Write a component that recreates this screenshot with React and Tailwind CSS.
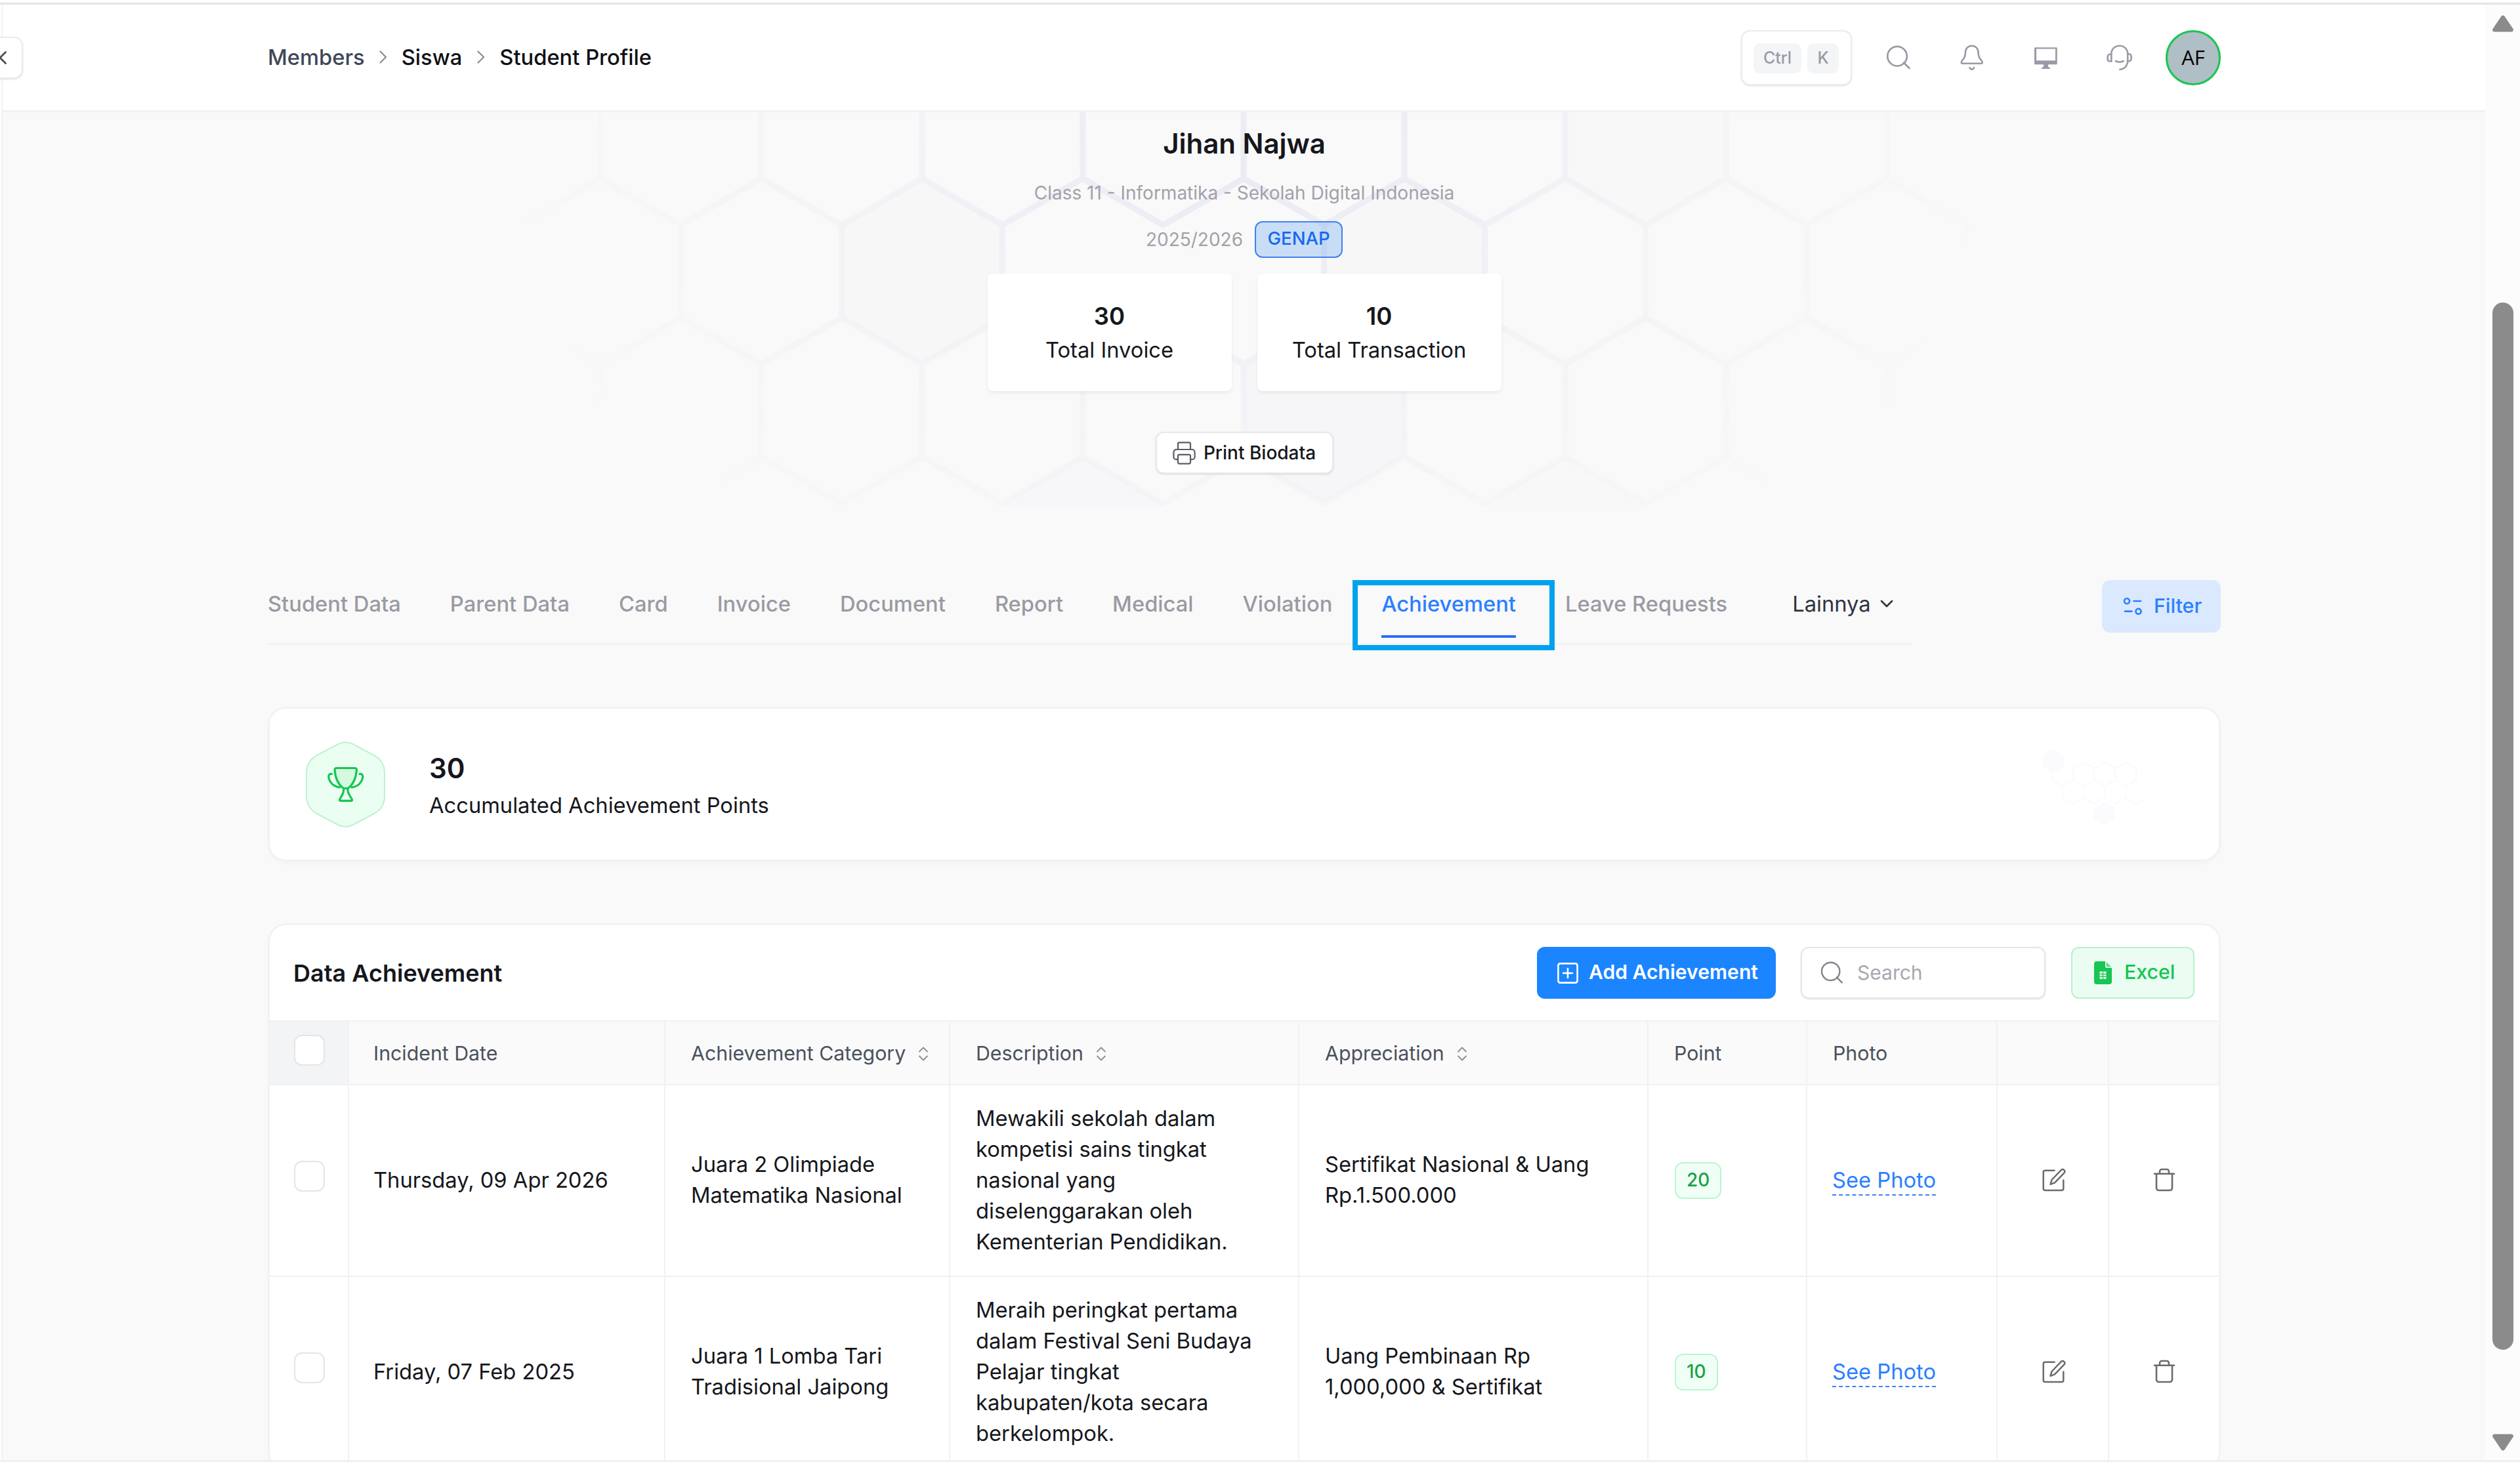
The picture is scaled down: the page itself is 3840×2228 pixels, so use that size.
import React, { useState } from 'react';
import clsx from 'clsx';

const tabs = [
  'Student Data',
  'Parent Data',
  'Card',
  'Invoice',
  'Document',
  'Report',
  'Medical',
  'Violation',
  'Achievement',
  'Leave Requests',
];

const columns = [
  { label: 'Incident Date' },
  { label: 'Achievement Category', sortable: true },
  { label: 'Description', sortable: true },
  { label: 'Appreciation', sortable: true },
  { label: 'Point' },
  { label: 'Photo' },
  { label: '' },
  { label: '' },
];

const achievements = [
  {
    id: 1,
    date: 'Thursday, 09 Apr 2026',
    category: 'Juara 2 Olimpiade\nMatematika Nasional',
    description:
      'Mewakili sekolah dalam\nkompetisi sains tingkat\nnasional yang\ndiselenggarakan oleh\nKementerian Pendidikan.',
    appreciation: 'Sertifikat Nasional & Uang\nRp.1.500.000',
    point: 20,
  },
  {
    id: 2,
    date: 'Friday, 07 Feb 2025',
    category: 'Juara 1 Lomba Tari\nTradisional Jaipong',
    description:
      'Meraih peringkat pertama\ndalam Festival Seni Budaya\nPelajar tingkat\nkabupaten/kota secara\nberkelompok.',
    appreciation: 'Uang Pembinaan Rp\n1,000,000 & Sertifikat',
    point: 10,
  },
];

const GRID = 'grid grid-cols-[121px_482px_434px_532px_532px_242px_290px_170px_167px]';

/* ---------- icons ---------- */

function SearchIcon({ className }) {
  return (
    <svg viewBox="0 0 40 40" className={className} fill="none" stroke="currentColor" strokeWidth="2.7" strokeLinecap="round">
      <circle cx="18" cy="17.7" r="14.8" />
      <path d="M28 27.5 36.5 36" />
    </svg>
  );
}

function BellIcon() {
  return (
    <svg viewBox="0 0 40 40" className="size-10" fill="none" stroke="currentColor" strokeWidth="2.6" strokeLinecap="round" strokeLinejoin="round">
      <path d="M19.7 1.7c-5.8 0-9.8 4.6-9.8 10.3 0 5.5-1.4 8.6-4.8 12.2-1.7 1.9-2.2 4.5.6 4.5h28c2.8 0 2.3-2.6.6-4.5-3.4-3.6-4.8-6.7-4.8-12.2 0-5.7-4-10.3-9.8-10.3z" />
      <path d="M16.3 35.2c1.6 3.2 5.2 3.2 6.8 0" />
    </svg>
  );
}

function MonitorIcon() {
  return (
    <svg viewBox="0 0 40 40" className="size-10" fill="currentColor">
      <path
        fillRule="evenodd"
        d="M4 4.3h32.7a1 1 0 0 1 1 1v24a1 1 0 0 1-1 1H24v3.4l3 1.8V37H13.7v-1.5l3.3-1.8v-3.4H4a1 1 0 0 1-1-1v-24a1 1 0 0 1 1-1zM6 6.6v17.6h29V6.6z"
      />
    </svg>
  );
}

function SupportIcon() {
  return (
    <svg viewBox="0 0 40 40" className="size-10 overflow-visible" fill="none" stroke="currentColor" strokeWidth="2.6" strokeLinecap="round" strokeLinejoin="round">
      <path d="M8.3 25.3V13.8C8.3 6.8 13.8 1.7 20.7 1.7S33.2 6.8 33.2 13.8v10.4c0 8-5 13-12 13.5" />
      <path d="M8.3 14.8H6.2A3.5 3.5 0 0 0 2.7 18.3V22.5A2.8 2.8 0 0 0 5.5 25.3H8.3" />
      <path d="M33.2 14.3h1.6a3.8 3.8 0 0 1 3.8 3.8v3.6a3.4 3.4 0 0 1-3.4 3.4H33.2" />
      <path d="M15 24.9c3.2 2.2 8.5 2.2 11.7 0" />
    </svg>
  );
}

function PrinterIcon() {
  return (
    <svg viewBox="0 0 35 35" className="size-[35px]" fill="none" stroke="currentColor" strokeWidth="2.2" strokeLinejoin="round">
      <path d="M8 12V3.4A2 2 0 0 1 10 1.4H25a2 2 0 0 1 2 2V12" />
      <path d="M8 27.2H5.4a4 4 0 0 1-4-4V16a4 4 0 0 1 4-4h24.2a4 4 0 0 1 4 4v7.2a4 4 0 0 1-4 4H27" />
      <path d="M10 19.8h15a2 2 0 0 1 2 2v9.8a2 2 0 0 1-2 2H10a2 2 0 0 1-2-2v-9.8a2 2 0 0 1 2-2z" />
    </svg>
  );
}

function FilterIcon() {
  return (
    <svg viewBox="0 0 30 28" className="h-7 w-[30px]" fill="none" stroke="currentColor" strokeWidth="2.7" strokeLinecap="round">
      <circle cx="6" cy="6" r="4" />
      <path d="M16.5 6h10.5" />
      <circle cx="23.5" cy="21.7" r="4" />
      <path d="M3 21.7h10.5" />
    </svg>
  );
}

function PlusSquareIcon() {
  return (
    <svg viewBox="0 0 32 32" className="size-8" fill="none" stroke="currentColor" strokeWidth="2.6" strokeLinecap="round">
      <rect x="1.4" y="1.4" width="29.2" height="29.2" rx="3" />
      <path d="M16 9v14M9 16h14" />
    </svg>
  );
}

function SheetIcon() {
  return (
    <svg viewBox="0 0 27 35" className="h-[35px] w-[27px]">
      <path d="M4 0h13v7.5a2.5 2.5 0 0 0 2.5 2.5H27V31a4 4 0 0 1-4 4H4a4 4 0 0 1-4-4V4a4 4 0 0 1 4-4z" fill="#17c653" />
      <path d="M18.5.8 26.2 8.4H20.5a2 2 0 0 1-2-2z" fill="#5fdc8c" />
      <path d="M8.500 15.500h10v11.500h-10z" fill="#e3fbec" />
      <path d="M13.5 15.5V27M8.5 19.3h10M8.5 23.2h10" stroke="#17c653" strokeWidth="1.2" />
    </svg>
  );
}

function EditIcon() {
  return (
    <svg viewBox="0 0 36 36" className="size-9" fill="none" stroke="currentColor" strokeWidth="2.5" strokeLinecap="round" strokeLinejoin="round">
      <path d="M18.5 3.8H4.5A2.8 2.8 0 0 0 1.7 6.6V31.2A2.8 2.8 0 0 0 4.5 34H29.5a2.8 2.8 0 0 0 2.8-2.8V18.5" />
      <path d="M29 2.8a3.2 3.2 0 0 1 4.5 4.5L19 22.3 12.5 24.8 14.5 18z" />
    </svg>
  );
}

function TrashIcon() {
  return (
    <svg viewBox="0 0 34 36" className="h-9 w-[34px]" fill="none" stroke="currentColor" strokeWidth="2.6" strokeLinecap="round" strokeLinejoin="round">
      <path d="M2 8.8h30M10 8.5V5.2A3.2 3.2 0 0 1 13.2 2h7.6A3.2 3.2 0 0 1 24 5.2V8.5" />
      <path d="M5 9v21.5A3.5 3.5 0 0 0 8.5 34h17a3.5 3.5 0 0 0 3.5-3.5V9" />
    </svg>
  );
}

function SortIcon() {
  return (
    <svg viewBox="0 0 16 22" className="h-[22px] w-4 text-[#8a8d93]" fill="none" stroke="currentColor" strokeWidth="1.8" strokeLinecap="round" strokeLinejoin="round">
      <path d="M2 7.5 8 1.5 14 7.5M2 14.5l6 6 6-6" />
    </svg>
  );
}

function Chevron() {
  return (
    <svg viewBox="0 0 12 20" className="h-5 w-3 text-[#8a8d93]" fill="none" stroke="currentColor" strokeWidth="2.2" strokeLinecap="round" strokeLinejoin="round">
      <path d="M1.5 1.5 10 10 1.5 18.5" />
    </svg>
  );
}

function TrophyBadge() {
  return (
    <svg viewBox="0 0 121 131" className="h-[131px] w-[121px]">
      <path
        d="M50 3.5Q60.5-1 71 3.5L103 20.5Q120 29.5 120 48V83Q120 101.5 103 110.5L71 127.5Q60.5 132 50 127.5L18 110.5Q1 101.5 1 83V48Q1 29.5 18 20.5Z"
        fill="#eafff1"
        stroke="#bff1d2"
        strokeWidth="2"
      />
      <g fill="none" stroke="#17c653" strokeWidth="3.2" strokeLinecap="round" strokeLinejoin="round">
        <path d="M46.5 40.5H75a2.5 2.5 0 0 1 2.5 2.8C76.5 56 73 65 64 71.500H57.5C48.500 65 45 56 44 43.300A2.500 2.500 0 0 1 46.500 40.500Z" fill="#d3fadf" />
        <path d="M57.5 71.5C59 78 54 83.5 51.5 88.500A1.200 1.200 0 0 0 52.600 90.300H69.500A1.200 1.200 0 0 0 70.500 88.500C68 83.500 62.500 78 64 71.500" />
        <path d="M39.500 49.500C33 48.500 34 56 37.500 61.500 40.500 66.500 45 69 51.500 69.800" />
        <path d="M82 49.500C88.500 48.500 87.500 56 84 61.500 81 66.500 76.500 69 70 69.800" />
      </g>
    </svg>
  );
}

/* ---------- decorative honeycomb ---------- */

const STEP = 245;
const HALF = 122.5;

// apexes on `from` sit at the same x as `start`, valleys on `to` half a step away
function zigzag(start, from, to) {
  let d = `M${start} ${from}`;
  for (let x = start; x < 3100; x += STEP) {
    d += `L${x + HALF} ${to}L${x + STEP} ${from}`;
  }
  return d;
}

function verticals(start, top, bottom, skip) {
  let d = '';
  for (let x = start; x < 3100; x += STEP) {
    if (x !== skip) d += `M${x} ${top}V${bottom}`;
  }
  return d;
}

function hexagon(cx, cy) {
  return `M${cx} ${cy - 141.5}L${cx + HALF} ${cy - 71}V${cy + 71}L${cx} ${cy + 141.5}L${cx - HALF} ${cy + 71}V${cy - 71}Z`;
}

function Honeycomb() {
  return (
    <svg viewBox="800 171 2200 600" className="pointer-events-none absolute top-0 left-[392px] h-[600px] w-[2200px]">
      <defs>
        <radialGradient id="comb-fade" gradientUnits="userSpaceOnUse" cx="0" cy="0" r="1" gradientTransform="translate(1895 270) scale(1150 680)">
          <stop offset="0" stopColor="#fff" />
          <stop offset="0.25" stopColor="#fff" stopOpacity="0.85" />
          <stop offset="0.5" stopColor="#fff" stopOpacity="0.36" />
          <stop offset="0.78" stopColor="#fff" stopOpacity="0.18" />
          <stop offset="1" stopColor="#fff" stopOpacity="0" />
        </radialGradient>
        <mask id="comb-mask" maskUnits="userSpaceOnUse" x="800" y="171" width="2200" height="600">
          <rect x="800" y="171" width="2200" height="600" fill="url(#comb-fade)" />
        </mask>
      </defs>
      <path d={hexagon(1405, 413.5)} fill="#f7f7f8" />
      <path d={hexagon(2017.5, 625.5)} fill="#f6f6f8" />
      <path d={hexagon(1650, 837.5)} fill="#f7f7f9" />
      <path d={hexagon(2385, 837.5)} fill="#f8f8f8" />
      <path d={hexagon(2507.5, 201.5)} fill="#f8f8f8" />
      <path d={hexagon(2140, 413.5)} fill="#f7f7f7" />
      <g mask="url(#comb-mask)" fill="none" stroke="#ebebf4" strokeWidth="9">
        <path d={verticals(915, 160, 272)} />
        <path d={zigzag(670, 272, 343)} />
        <path d={verticals(1037.5, 343, 484, 1772.5)} />
        <path d={zigzag(670, 555, 484)} />
        <path d={verticals(915, 555, 696)} />
        <path d={zigzag(670, 696, 767)} />
      </g>
    </svg>
  );
}

function CardComb() {
  return (
    <svg viewBox="0 0 210 180" className="h-[180px] w-[210px]" fill="none" stroke="#fafafb" strokeWidth="2">
      <path d="M10 45l16-9 16 9v18l-16 9-16-9zM88 126l16-9 16 9v18l-16 9-16-9z" fill="#fbfbfd" stroke="none" />
      <path d="M24 66v18l16 9 16-9V66l16-9 16 9v18l-16 9-16-9M88 66l16-9 16 9v18l-16 9-16-9M120 66l16-9 16 9v18l-16 9-16-9M40 93v18l16 9 16-9V93M72 111l16 9 16-9V93M104 111l16 9 16-9V93M136 93v18l16 9 16-9" />
    </svg>
  );
}

/* ---------- page sections ---------- */

function Header() {
  return (
    <header className="flex h-[164px] shrink-0 items-center justify-between border-b-3 border-[#f2f2f3] bg-white pr-[403px] pl-[404px]">
      <nav className="flex items-center text-[32.7px] font-medium text-[#0e1014]">
        <span className="text-[#3f4757]">Members</span>
        <span className="mr-[22px] ml-[22px]"><Chevron /></span>
        <span>Siswa</span>
        <span className="mr-[22px] ml-[23px]"><Chevron /></span>
        <span>Student Profile</span>
      </nav>

      <div className="flex items-center text-[#9a9aa6]">
        <div className="mr-[51px] flex h-[84px] w-[169px] items-center gap-[9px] rounded-[14px] border-2 border-[#ececee] bg-white pt-0.5 pl-[17px] shadow-sm">
          <kbd className="flex h-[46px] w-[73px] items-center justify-center rounded-[10px] bg-[#f3f5f7] font-['Inter'] text-[25px] font-medium">Ctrl</kbd>
          <kbd className="flex h-[46px] w-12 items-center justify-center rounded-[10px] bg-[#f3f5f7] font-['Inter'] text-[25px] font-medium">K</kbd>
        </div>
        <div className="flex items-center gap-[72px]">
          <SearchIcon className="size-10" />
          <BellIcon />
          <MonitorIcon />
          <SupportIcon />
        </div>
        <div className="ml-[51px] flex size-[84px] items-center justify-center rounded-full border-3 border-[#17c653] bg-[#b0bec5] font-['Open_Sans'] text-[31px] text-black">
          AF
        </div>
      </div>
    </header>
  );
}

function StatCard({ value, label }) {
  return (
    <div className="flex h-[179px] w-[372px] flex-col items-center justify-center rounded-lg bg-white shadow-[0_3px_5px_rgba(0,0,0,0.06)]">
      <span className="text-[36.5px] leading-[52px] font-semibold">{value}</span>
      <span className="text-[32.7px] leading-[50px]">{label}</span>
    </div>
  );
}

function Profile() {
  return (
    <section className="relative flex flex-col items-center pt-[23px] text-[#15171c]">
      <Honeycomb />
      <div className="relative flex flex-col items-center">
        <h1 className="text-[42px] leading-[50px] font-semibold">Jihan Najwa</h1>
        <p className="mt-[30px] text-[28px] leading-10 text-[#a1a1aa]">
          Class 11 - Informatika - Sekolah Digital Indonesia
        </p>
        <div className="mt-[23px] flex h-14 items-center gap-[18px] text-[28px]">
          <span className="text-[#a1a1aa]">2025/2026</span>
          <span className="flex h-14 w-[134px] items-center justify-center rounded-xl border-2 border-[#3e82f2] bg-[#3b8cf2]/25 pb-0.5 text-[27.5px] font-medium text-[#1668ee]">
            GENAP
          </span>
        </div>
        <div className="mt-6 flex gap-[39px]">
          <StatCard value="30" label="Total Invoice" />
          <StatCard value="10" label="Total Transaction" />
        </div>
        <button className="mt-[62px] flex h-16 w-[271px] items-center justify-center gap-3 rounded-xl border-2 border-[#e8e8ea] bg-white text-[28px] font-medium shadow-sm">
          <span className="text-[#5b5d63]"><PrinterIcon /></span>
          Print Biodata
        </button>
      </div>
    </section>
  );
}

function Tabs() {
  const [active, setActive] = useState('Achievement');

  return (
    <div className="relative mt-[162px] flex items-start justify-between">
      <div className="flex h-[99px] w-[2505px] items-start border-b-3 border-[#f4f4f5] text-[32.7px] leading-[48px] font-medium whitespace-nowrap">
        <div className="flex gap-[75px]">
          {tabs.map(tab => (
            <button
              key={tab}
              onClick={() => setActive(tab)}
              className={clsx(
                'relative flex h-[88px] border-b-4 pt-3',
                tab === active ? 'border-[#2b6ef6] text-[#2b7fff]' : 'border-transparent text-[#9a9aa3]'
              )}
            >
              {tab}
              {tab === active && (
                <span className="absolute top-0 -left-11 h-[107px] w-[308px] border-8 border-[#00a2ed]" />
              )}
            </button>
          ))}
        </div>
        <button className="ml-[99px] flex items-center gap-[14px] pt-3 font-normal text-[#2f3440]">
          Lainnya
          <svg viewBox="0 0 20 12" className="h-3 w-5" fill="none" stroke="currentColor" strokeWidth="2.6" strokeLinecap="round" strokeLinejoin="round">
            <path d="M2 2l8 8 8-8" />
          </svg>
        </button>
      </div>
      <button className="flex h-20 w-[181px] items-center gap-[17px] rounded-xl bg-[#dbe9ff] pl-8 text-[30.3px] font-medium text-[#2b7fff]">
        <FilterIcon />
        Filter
      </button>
    </div>
  );
}

function PointsCard() {
  return (
    <section className="mt-[94px] flex h-[236px] items-center rounded-[28px] border-3 border-[#f2f2f3] bg-white pl-[55px] shadow-[0_4px_5px_rgba(0,0,0,0.02)]">
      <TrophyBadge />
      <div className="ml-[67px] flex flex-col pt-2 text-[#15171c]">
        <span className="text-[42px] leading-[56px] font-semibold">30</span>
        <span className="text-[32.7px] leading-[56px]">Accumulated Achievement Points</span>
      </div>
      <div className="mr-[68px] ml-auto"><CardComb /></div>
    </section>
  );
}

function Checkbox() {
  return (
    <span className="size-[47px] rounded-xl border-2 border-[#e4e5e8] bg-white" />
  );
}

function Cell({ className, children }) {
  return (
    <div className={clsx('flex items-center border-r-2 border-[#f1f1f3] last:border-r-0', className)}>
      {children}
    </div>
  );
}

function AchievementTable() {
  return (
    <section className="mt-[94px] rounded-[28px] border-3 border-[#f2f2f3] bg-white text-[#15171c]">
      <div className="flex h-[147px] items-center border-b-2 border-[#f1f1f3] pr-[37px] pl-[36px]">
        <h2 className="text-[36px] font-semibold">Data Achievement</h2>
        <button className="mr-[38px] ml-auto flex h-[79px] w-[364px] items-center gap-4 rounded-xl bg-[#1b84ff] pl-[31px] text-[30.1px] font-semibold text-white">
          <PlusSquareIcon />
          <span className="pb-0.5 whitespace-nowrap">Add Achievement</span>
        </button>
        <div className="mr-[39px] flex h-[79px] w-[373px] items-center gap-5 rounded-xl border-2 border-[#e6e6e9] pl-[27px] shadow-sm">
          <SearchIcon className="size-[37px] text-[#85888f]" />
          <span className="text-[30px] text-[#a6a8af]">Search</span>
        </div>
        <button className="flex h-[79px] w-[188px] items-center gap-[19px] rounded-xl border-2 border-[#b9efcd] bg-[#ebfdf2] pl-[33px] text-[30.3px] font-medium text-[#17c653]">
          <SheetIcon />
          <span className="pb-0.5">Excel</span>
        </button>
      </div>

      <div className={clsx(GRID, 'h-[97px] border-b-2 border-[#f1f1f3] bg-[#fafafa] text-[30.3px] text-[#4b515c]')}>
        <Cell className="bg-[#f3f4f6] pb-2 pl-[37px]"><Checkbox /></Cell>
        {columns.map((col, i) => (
          <Cell key={i} className={clsx('gap-[19px] pt-0.5 whitespace-nowrap', i === 0 ? 'pl-[37px]' : 'pl-[39px]')}>
            {col.label}
            {col.sortable && <SortIcon />}
          </Cell>
        ))}
      </div>

      {achievements.map(row => (
        <div key={row.id} className={clsx(GRID, 'h-[292px] border-b-2 border-[#f1f1f3] text-[32.7px] leading-[47px] whitespace-pre')}>
          <Cell className="pb-[13px] pl-[37px]"><Checkbox /></Cell>
          <Cell className="pb-0.5 pl-[37px]">{row.date}</Cell>
          <Cell className="pb-0.5 pl-[39px]">{row.category}</Cell>
          <Cell className="pb-0.5 pl-[39px]">{row.description}</Cell>
          <Cell className="pb-0.5 pl-[39px]">{row.appreciation}</Cell>
          <Cell className="pl-[40px]">
            <span className="flex h-14 items-center rounded-[13px] border-2 border-[#b9f5cf] bg-[#f0fff5] px-4 pb-0.5 text-[28px] font-medium text-[#1ba345]">
              {row.point}
            </span>
          </Cell>
          <Cell className="pl-[38px]">
            <a className="border-b-2 border-dashed border-[#3b82f6] leading-[44px] text-[#2b7fff]">See Photo</a>
          </Cell>
          <Cell className="justify-center pb-0.5 pl-1 text-[#6b6b6e]"><EditIcon /></Cell>
          <Cell className="justify-center pb-0.5 text-[#6b6b6e]"><TrashIcon /></Cell>
        </div>
      ))}
    </section>
  );
}

function Scrollbar() {
  return (
    <div className="flex w-[53px] shrink-0 flex-col items-center bg-[#fcfcfc] text-[#8b8b8b]">
      <svg viewBox="0 0 34 26" className="mt-4 h-[26px] w-[34px]" fill="currentColor">
        <path d="M14.5 1.8a3 3 0 0 1 5 0L32.5 21a3 3 0 0 1-2.5 4.5H4A3 3 0 0 1 1.5 21z" />
      </svg>
      <div className="mt-[412px] h-[1596px] w-8 rounded-full bg-[#8b8b8b]" />
      <svg viewBox="0 0 34 26" className="mt-32 h-[26px] w-[34px]" fill="currentColor">
        <path d="M14.5 24.2a3 3 0 0 0 5 0L32.5 5a3 3 0 0 0-2.5-4.5H4A3 3 0 0 0 1.5 5z" />
      </svg>
    </div>
  );
}

function App() {
  return (
    <div className="relative flex h-[2228px] w-[3840px] flex-col overflow-hidden bg-white font-['Inter',sans-serif]">
      <div className="mt-1 h-[3px] shrink-0 bg-[#e4e4e4]" />
      <div className="flex h-[2218px] shrink-0 pl-0.5">
        <main className="flex min-w-0 flex-1 flex-col overflow-hidden border-l-2 border-[#f3f3f4] bg-[#f9f9f9]">
          <Header />
          <div className="mr-[403px] ml-[404px] flex flex-col">
            <Profile />
            <Tabs />
            <PointsCard />
            <AchievementTable />
          </div>
        </main>
        <Scrollbar />
      </div>
      <div className="h-[3px] shrink-0 bg-[#f4eeee]" />

      {/* sidebar toggle, overlaps the left edge */}
      <button className="absolute top-14 -left-8 flex h-16 w-[67px] items-center justify-end rounded-[14px] border-2 border-[#ebebed] bg-white pr-[23px] text-[#4b4f57] shadow-sm">
        <svg viewBox="0 0 12 20" className="h-5 w-3" fill="none" stroke="currentColor" strokeWidth="2.8" strokeLinecap="round" strokeLinejoin="round">
          <path d="M10.5 1.5 2 10l8.500 8.500" />
        </svg>
      </button>
    </div>
  );
}

export default App;
